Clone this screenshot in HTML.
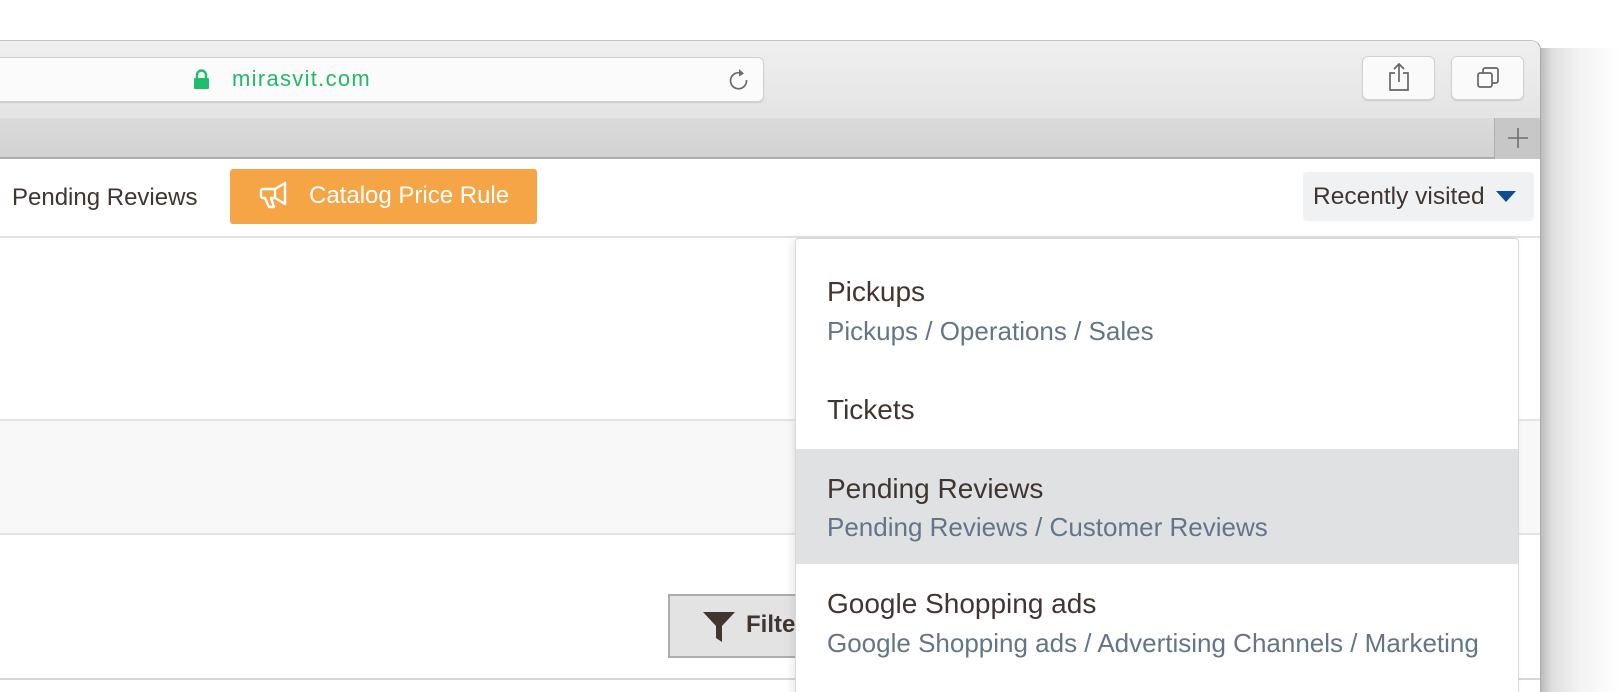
<!DOCTYPE html>
<html><head><meta charset="utf-8"><style>
*{margin:0;padding:0;box-sizing:border-box}
body{width:1620px;height:692px;overflow:hidden;background:#fff;position:relative;font-family:"Liberation Sans",sans-serif}
.abs{position:absolute;white-space:nowrap}
</style></head><body>
<div class="abs" style="left:1540px;top:48px;width:80px;height:644px;background:linear-gradient(90deg,#b9b9b9 0,#dedede 12px,#f3f3f3 40px,#fff 80px)"></div>
<div class="abs" style="left:0;top:40px;width:1541px;height:652px;border-top:1px solid #c4c4c4;border-right:1px solid #aaa;border-top-right-radius:10px;overflow:hidden;background:#fff">
  <div class="abs" style="left:0;top:0;width:1541px;height:77px;background:linear-gradient(#efefef,#e4e4e4)"></div>
  <div class="abs" style="left:0;top:77px;width:1541px;height:41px;background:linear-gradient(#dcdbdc,#d3d2d3);border-bottom:2px solid #aeaeae"></div>
  <div class="abs" style="left:-10px;top:16px;width:774px;height:45px;background:#fbfbfb;border:1px solid #d0d0d0;border-radius:6px;box-shadow:0 1px 1px #c9c9c9"></div>
  <svg class="abs" style="left:193px;top:28px" width="17" height="20" viewBox="0 0 17 20"><path d="M4 9V6a4.5 4.5 0 0 1 9 0v3" fill="none" stroke="#1dbe6c" stroke-width="2.4"/><rect x="1" y="9" width="15" height="11" rx="1" fill="#1dbe6c"/></svg>
  <div class="abs" style="left:232px;top:25px;font-size:22px;color:#22b86a;letter-spacing:1.3px">mirasvit.com</div>
  <svg class="abs" style="left:727px;top:26px" width="24" height="26" viewBox="0 0 24 26"><path d="M15 6.5A8 8 0 1 0 19.5 13" fill="none" stroke="#6a6a6a" stroke-width="1.7"/><path d="M12 2l5 4.5-5 3z" fill="#6a6a6a"/></svg>
  <div class="abs" style="left:1362px;top:15px;width:73px;height:44px;background:#fafafa;border:1px solid #d2d2d2;border-radius:6px;box-shadow:0 1px 1px #ccc"></div>
  <svg class="abs" style="left:1387px;top:20px" width="24" height="32" viewBox="0 0 24 32"><path d="M8 12H3v17h18V12h-5M12 3v18M7 8l5-5 5 5" fill="none" stroke="#666" stroke-width="1.7"/></svg>
  <div class="abs" style="left:1451px;top:15px;width:73px;height:44px;background:#fafafa;border:1px solid #d2d2d2;border-radius:6px;box-shadow:0 1px 1px #ccc"></div>
  <svg class="abs" style="left:1475px;top:24px" width="26" height="26" viewBox="0 0 26 26"><rect x="3" y="8" width="14" height="14" rx="2" fill="none" stroke="#666" stroke-width="1.7"/><path d="M8 8V5a2 2 0 0 1 2-2h11a2 2 0 0 1 2 2v11a2 2 0 0 1-2 2h-4" fill="none" stroke="#666" stroke-width="1.7"/></svg>
  <div class="abs" style="left:1494px;top:77px;width:47px;height:41px;background:#c8c7c8;border-left:1px solid #b0b0b0"></div>
  <svg class="abs" style="left:1506px;top:85px" width="24" height="24" viewBox="0 0 24 24"><path d="M12 2v20M2 12h20" stroke="#6e6e6e" stroke-width="1.6"/></svg>
  <div class="abs" style="left:0;top:120px;width:1541px;height:532px;background:#fff">
    <div class="abs" style="left:12px;top:23px;font-size:24px;color:#41362f">Pending Reviews</div>
    <div class="abs" style="left:230px;top:8px;width:307px;height:55px;background:#f5a545;border-radius:3px"></div>
    <svg class="abs" style="left:259px;top:20px" width="36" height="28" viewBox="0 0 36 28"><path d="M26 2L16 8H4a2 2 0 0 0-2 2v5a2 2 0 0 0 2 2h2l4 9h5l-3-9h4l10 6z" fill="none" stroke="#fff" stroke-width="2.4" stroke-linejoin="round"/><path d="M16 8v9" stroke="#fff" stroke-width="2.4"/></svg>
    <div class="abs" style="left:309px;top:21px;font-size:24px;color:#fff">Catalog Price Rule</div>
    <div class="abs" style="left:1303px;top:11px;width:231px;height:49px;background:#f0f1f2;border-radius:4px"></div>
    <div class="abs" style="left:1313px;top:22px;font-size:24.5px;color:#41362f">Recently visited</div>
    <svg class="abs" style="left:1496px;top:30px" width="20" height="12" viewBox="0 0 20 12"><path d="M0 0h20L10 11z" fill="#0d4f8c"/></svg>
    <div class="abs" style="left:0;top:75px;width:1541px;height:2px;background:#e3e3e3"></div>
    <div class="abs" style="left:0;top:258px;width:1541px;height:116px;background:#f8f8f8;border-top:2px solid #e3e3e3;border-bottom:2px solid #e3e3e3"></div>
    <div class="abs" style="left:668px;top:433px;width:150px;height:64px;background:#e3e3e3;border:2px solid #adadad"></div>
    <svg class="abs" style="left:702px;top:450px" width="34" height="32" viewBox="0 0 34 32"><path d="M1 1h32L20 15v16l-6-4V15z" fill="#41362f"/></svg>
    <div class="abs" style="left:746px;top:450px;font-size:24px;font-weight:bold;color:#41362f">Filters</div>
    <div class="abs" style="left:0;top:517px;width:1541px;height:2px;background:#d8d8d8"></div>
    <div class="abs" style="left:795px;top:77px;width:724px;height:470px;background:#fff;border:1px solid #d6d9dc;border-radius:4px;box-shadow:-3px 0 8px rgba(0,0,0,.08)">
      <div class="abs" style="left:0;top:210px;width:722px;height:115px;background:#dfe1e3"></div>
      <div class="abs" style="left:31px;top:37px;font-size:28px;color:#41362f">Pickups</div>
      <div class="abs" style="left:31px;top:77px;font-size:26px;color:#657588">Pickups / Operations / Sales</div>
      <div class="abs" style="left:31px;top:155px;font-size:28px;color:#41362f">Tickets</div>
      <div class="abs" style="left:31px;top:234px;font-size:28px;color:#41362f">Pending Reviews</div>
      <div class="abs" style="left:31px;top:273px;font-size:26px;color:#657588">Pending Reviews / Customer Reviews</div>
      <div class="abs" style="left:31px;top:349px;font-size:28px;color:#41362f">Google Shopping ads</div>
      <div class="abs" style="left:31px;top:389px;font-size:26px;color:#657588">Google Shopping ads / Advertising Channels / Marketing</div>
    </div>
  </div>
</div>
</body></html>
